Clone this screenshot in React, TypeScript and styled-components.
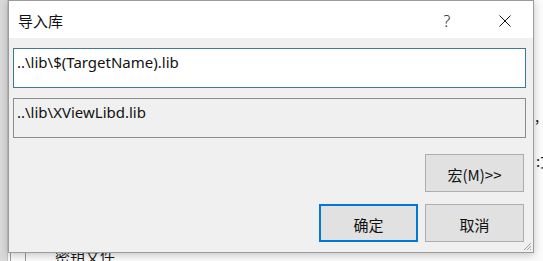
import React from 'react';
import styled, { createGlobalStyle } from 'styled-components';

const GlobalStyle = createGlobalStyle`
  html, body {
    margin: 0;
    padding: 0;
  }
  body {
    width: 543px;
    height: 261px;
    overflow: hidden;
    background: #fbfbfb;
    font-family: "Noto Sans", "Noto Sans CJK SC", sans-serif;
    color: #000;
  }
`;

const Desktop = styled.div`
  position: relative;
  width: 543px;
  height: 261px;
  overflow: hidden;
  background: #fbfbfb;
`;

// what shows of the window behind the dialog
const LeftStrip = styled.div`
  position: absolute;
  left: 0;
  top: 0;
  width: 8px;
  height: 100%;
  background: #d9d9d9;
  border-right: 1px solid #c4c4c4;
  box-sizing: border-box;
`;

const TreeLine = styled.div<{ $x: number }>`
  position: absolute;
  left: ${(p) => p.$x}px;
  top: 250px;
  width: 1px;
  height: 11px;
  background: #9a9a9a;
`;

const BehindText = styled.span<{ $x: number; $y: number }>`
  position: absolute;
  left: ${(p) => p.$x}px;
  top: ${(p) => p.$y}px;
  font-family: "Noto Sans CJK SC", sans-serif;
  font-size: 15px;
  line-height: 20px;
  color: #1a1a1a;
  white-space: nowrap;
`;

const Dialog = styled.div`
  position: absolute;
  left: 8px;
  top: 0;
  width: 526px;
  height: 253px;
  box-sizing: border-box;
  border: 1px solid #9c9c9c;
  background: #f0f0f0;
  display: flex;
  flex-direction: column;
  box-shadow: 0 2px 8px rgba(0, 0, 0, 0.22);
`;

const TitleBar = styled.div`
  height: 37px;
  flex: none;
  background: #fff;
  display: flex;
  align-items: center;
  padding-left: 9px;
`;

const Title = styled.span`
  flex: 1;
  font-family: "Noto Sans CJK SC", sans-serif;
  font-size: 15px;
  line-height: 20px;
  padding-top: 2px;
  color: #111;
`;

const TitleButtons = styled.div`
  display: flex;
  gap: 12px;
  padding-right: 5px;
  height: 100%;
`;

const TitleButton = styled.div`
  width: 46px;
  height: 100%;
  display: flex;
  align-items: center;
  justify-content: center;
  font-size: 16px;
  font-weight: 300;
  color: #222;
  padding-top: 2px;
  box-sizing: border-box;
`;

const Body = styled.div`
  flex: 1;
  display: flex;
  flex-direction: column;
  padding: 10px 7px 0 4px;
  position: relative;
`;

const Field = styled.div<{ $readOnly?: boolean }>`
  height: 40px;
  box-sizing: border-box;
  border: 1px solid ${(p) => (p.$readOnly ? '#8c8c8c' : '#3f7896')};
  background: ${(p) => (p.$readOnly ? '#f0f0f0' : '#fff')};
  padding: 3px 3px;
  font-size: 15px;
  line-height: 20px;
  color: #111;
  white-space: nowrap;
  & + & {
    margin-top: 10px;
  }
`;

const ButtonRow = styled.div<{ $top: number }>`
  display: flex;
  justify-content: flex-end;
  gap: 7px;
  padding-right: 2px;
  margin-top: ${(p) => p.$top}px;
`;

const Button = styled.div<{ $default?: boolean }>`
  width: 99px;
  height: 38px;
  box-sizing: border-box;
  border: ${(p) => (p.$default ? '2px solid #0078d7' : '1px solid #adadad')};
  background: #e1e1e1;
  display: flex;
  align-items: center;
  justify-content: center;
  padding-top: 2px;
  font-family: "Noto Sans CJK SC", sans-serif;
  font-size: 15px;
  color: #111;
`;

const Grip = styled.svg`
  position: absolute;
  right: 1px;
  bottom: 1px;
`;

export default function App() {
  return (
    <>
      <GlobalStyle />
      <Desktop>
        <LeftStrip />
        <TreeLine $x={10} />
        <TreeLine $x={25} />
        <BehindText $x={55} $y={246}>密钥文件</BehindText>
        <BehindText $x={536} $y={151}>:文</BehindText>
        <BehindText $x={535} $y={106}>,</BehindText>
        <Dialog>
          <TitleBar>
            <Title>导入库</Title>
            <TitleButtons>
              <TitleButton>?</TitleButton>
              <TitleButton>
                <svg width="12" height="12" viewBox="0 0 12 12">
                  <path d="M0.5 0.5L11.5 11.5M11.5 0.5L0.5 11.5" stroke="#111" strokeWidth="1" />
                </svg>
              </TitleButton>
            </TitleButtons>
          </TitleBar>
          <Body>
            <Field>..\lib\$(TargetName).lib</Field>
            <Field $readOnly>..\lib\XViewLibd.lib</Field>
            <ButtonRow $top={16}>
              <Button>宏(M)&gt;&gt;</Button>
            </ButtonRow>
            <ButtonRow $top={12}>
              <Button $default>确定</Button>
              <Button>取消</Button>
            </ButtonRow>
            <Grip width="10" height="10" viewBox="0 0 10 10">
              <path d="M9 2L2 9M9 5L5 9M9 8L8 9" stroke="#a0a0a0" strokeWidth="1" />
            </Grip>
          </Body>
        </Dialog>
      </Desktop>
    </>
  );
}
